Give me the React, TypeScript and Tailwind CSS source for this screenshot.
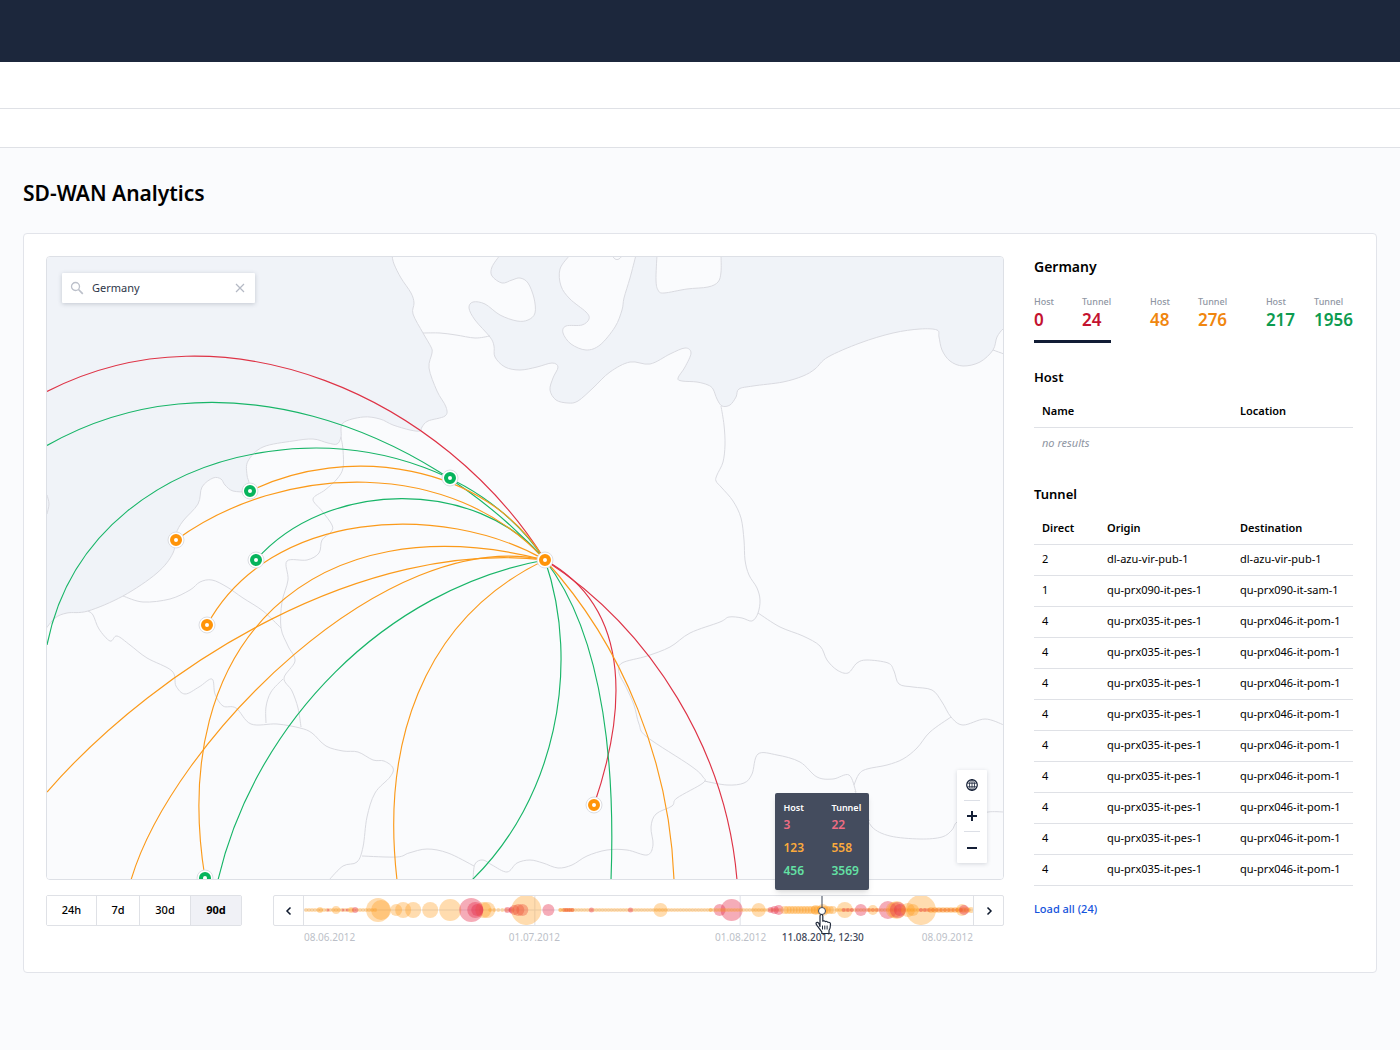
import { useState } from "react";
import type { ReactNode } from "react";

type Point = [number, number];

/* Smooth curve through the given points (Catmull-Rom converted to cubic Béziers). */
function curve(points: Point[], start = "M"): string {
  let d = `${start}${points[0][0]} ${points[0][1]}`;
  for (let i = 0; i < points.length - 1; i++) {
    const p0 = points[i - 1] ?? points[i];
    const p1 = points[i];
    const p2 = points[i + 1];
    const p3 = points[i + 2] ?? p2;
    const c1 = [p1[0] + (p2[0] - p0[0]) / 6, p1[1] + (p2[1] - p0[1]) / 6];
    const c2 = [p2[0] - (p3[0] - p1[0]) / 6, p2[1] - (p3[1] - p1[1]) / 6];
    d += `C${c1[0].toFixed(1)} ${c1[1].toFixed(1)} ${c2[0].toFixed(1)} ${c2[1].toFixed(1)} ${p2[0]} ${p2[1]}`;
  }
  return d;
}

/* One cubic Bézier from the first to the last point, fitted to the waypoints between them by least squares. */
function arc(points: Point[]): string {
  const n = points.length;
  const first = points[0];
  const last = points[n - 1];
  const t = [0];
  for (let i = 1; i < n; i++) {
    t.push(t[i - 1] + Math.hypot(points[i][0] - points[i - 1][0], points[i][1] - points[i - 1][1]));
  }
  const total = t[n - 1];
  for (let i = 0; i < n; i++) t[i] /= total;

  let c1: Point = first;
  let c2: Point = last;
  const at = (u: number): Point => {
    const v = 1 - u;
    return [0, 1].map(
      (k) => v * v * v * first[k] + 3 * v * v * u * c1[k] + 3 * v * u * u * c2[k] + u * u * u * last[k],
    ) as Point;
  };
  for (let pass = 0; pass < 30; pass++) {
    let aa = 0;
    let ab = 0;
    let bb = 0;
    const ra = [0, 0];
    const rb = [0, 0];
    for (let i = 1; i < n - 1; i++) {
      const u = t[i];
      const v = 1 - u;
      const a = 3 * v * v * u;
      const b = 3 * v * u * u;
      aa += a * a;
      ab += a * b;
      bb += b * b;
      for (const k of [0, 1]) {
        const rest = points[i][k] - v * v * v * first[k] - u * u * u * last[k];
        ra[k] += a * rest;
        rb[k] += b * rest;
      }
    }
    const det = aa * bb - ab * ab;
    c1 = [0, 1].map((k) => (bb * ra[k] - ab * rb[k]) / det) as Point;
    c2 = [0, 1].map((k) => (aa * rb[k] - ab * ra[k]) / det) as Point;
    for (let i = 1; i < n - 1; i++) {
      let best = t[i];
      let bestDistance = Infinity;
      for (let s = -20; s <= 20; s++) {
        const u = Math.min(0.999, Math.max(0.001, t[i] + s * 0.002));
        const [x, y] = at(u);
        const distance = Math.hypot(x - points[i][0], y - points[i][1]);
        if (distance < bestDistance) {
          bestDistance = distance;
          best = u;
        }
      }
      t[i] = best;
    }
  }
  return `M${first[0]} ${first[1]}C${c1[0].toFixed(1)} ${c1[1].toFixed(1)} ${c2[0].toFixed(1)} ${c2[1].toFixed(1)} ${last[0]} ${last[1]}`;
}

const NORTH_SEA_COAST: Point[] = [
  [392, 255], [394, 264], [401, 278], [411, 293], [414, 303], [413, 314], [423, 333], [431, 347], [432, 353], [429, 368], [437, 391],
  [446, 407], [445, 416], [428, 421], [422, 427], [420, 431], [410, 430], [393, 425], [380, 419], [363, 417], [343, 423], [341, 437],
  [337, 444], [328, 443], [313, 439], [293, 441], [263, 447], [248, 461], [247, 475], [249, 483], [247, 491], [233, 491],
  [225, 485], [221, 479], [213, 478], [202, 487], [198, 504], [183, 521], [176, 534], [173, 553], [157, 573],
  [123, 596], [88, 611], [67, 613], [55, 618], [45, 630],
];

const BALTIC_COAST: Point[] = [
  [1006, 329], [1003, 329], [997, 337], [993, 350], [980, 362], [963, 366], [950, 361], [942, 350], [939, 337], [937, 330], [920, 329],
  [893, 333], [860, 343], [828, 357], [815, 369], [803, 376], [783, 382], [753, 386], [739, 389], [736, 397], [730, 405],
  [722, 406], [717, 399], [713, 389], [708, 385], [697, 382], [682, 381], [678, 378], [685, 367], [691, 353], [685, 348],
  [670, 354], [650, 364], [630, 362], [610, 372], [593, 388], [578, 401], [568, 403], [556, 400], [550, 390], [553, 378],
  [558, 367], [552, 363], [537, 367], [520, 370], [505, 367], [495, 357], [494, 346], [490, 337], [475, 320], [469, 308],
  [473, 302], [485, 304], [500, 315], [517, 321], [528, 320], [535, 313], [534, 298], [528, 283], [520, 278], [512, 280],
  [502, 283], [492, 276], [492, 267], [500, 255],
];

const ZEALAND: Point[] = [
  [570, 255], [560, 269], [561, 286], [570, 299], [586, 312], [589, 319], [582, 325], [566, 326], [563, 333], [571, 344],
  [586, 350], [600, 345], [615, 327], [622, 310], [624, 298], [630, 278], [636, 255],
];

const SWEDEN: Point[] = [
  [657, 255], [656, 280], [658, 290], [664, 293], [687, 289], [708, 287], [718, 282], [721, 272], [721, 255],
];

const BORDERS: Point[][] = [
  [[423, 333], [440, 333], [456, 335], [475, 338], [490, 336]],
  [[47, 495], [49, 504], [47, 514]],
  [[612, 255], [615, 259], [619, 259], [623, 255]],
  [[993, 350], [1004, 354]],
  [[341, 437], [343, 450], [343, 468], [337, 479], [325, 490], [313, 499], [322, 511], [332, 525], [331, 532], [322, 540], [319, 553], [307, 560], [287, 561], [288, 580], [282, 602], [281, 628], [288, 646], [295, 661], [284, 678], [292, 691], [298, 708], [301, 727]],
  [[283, 679], [271, 692], [266, 707], [266, 723]],
  [[123, 596], [143, 602], [170, 599], [190, 590], [200, 582], [212, 580], [227, 587], [243, 598], [263, 611], [281, 628]],
  [[88, 611], [93, 615], [99, 629], [110, 641], [117, 636], [130, 645], [147, 658], [172, 671], [176, 686], [185, 694], [199, 687], [212, 679], [215, 694], [223, 706], [236, 708], [251, 724], [277, 724], [300, 728], [312, 733], [326, 746], [343, 751], [358, 752], [373, 760], [384, 761], [393, 768], [390, 777], [375, 793], [367, 817], [363, 847], [357, 862], [343, 866], [329, 880]],
  [[362, 856], [397, 857], [409, 853], [427, 849], [448, 853], [474, 866]],
  [[473, 880], [475, 864], [483, 860], [492, 865], [507, 872], [517, 863], [530, 860], [543, 863], [558, 868], [572, 865], [587, 856], [607, 850], [627, 850], [647, 855], [653, 845], [651, 827], [656, 814], [672, 806], [677, 798], [703, 783], [703, 777], [691, 766], [647, 737], [639, 724], [634, 705], [626, 687], [619, 673], [622, 663], [647, 656], [670, 647], [690, 633], [720, 622], [729, 617], [742, 618], [752, 621], [758, 613], [760, 600], [757, 588], [749, 575], [745, 560], [744, 540], [741, 518], [733, 501], [722, 488], [716, 481], [717, 475], [723, 462], [725, 445], [724, 425], [721, 406]],
  [[758, 613], [780, 627], [803, 636], [820, 646], [827, 660], [837, 670], [848, 673], [857, 663], [867, 660], [888, 663], [894, 671], [899, 684], [913, 687], [932, 690], [942, 702], [951, 717], [963, 725], [985, 719], [1004, 725]],
  [[951, 717], [930, 732], [917, 748], [903, 759], [887, 765], [867, 769], [859, 774], [854, 785]],
  [[704, 781], [727, 785], [744, 783], [752, 774], [758, 754], [777, 755], [800, 762], [817, 777], [833, 779], [849, 775], [856, 792]],
  [[855, 791], [864, 810], [872, 827], [890, 836], [920, 839], [942, 837], [952, 830], [957, 822], [972, 817], [988, 812], [1004, 812]],
  [[864, 824], [870, 820]],
];

const RED = "#de3346";
const GREEN = "#18b568";
const ORANGE = "#fb9a1a";

const TUNNELS: { color: string; points: Point[] }[] = [
  { color: RED, points: [[47, 391.5], [100, 370.5], [150, 359.7], [202, 356], [250, 359.8], [333, 384], [400, 417], [434, 440], [475, 475], [507, 509], [545, 560]] },
  { color: RED, points: [[545, 560], [577, 585], [597, 610], [610, 640], [616, 690], [608, 755], [594, 805]] },
  { color: RED, points: [[545, 560], [580, 585], [620, 623], [650, 658], [690, 720], [712, 769], [730, 833], [737, 880]] },
  { color: GREEN, points: [[47, 445.5], [100, 422], [155, 407.5], [217, 402.7], [280, 407.5], [342, 424.5], [380, 440.5], [410, 455], [440, 473], [470, 493], [510, 525], [545, 560]] },
  { color: GREEN, points: [[47, 645], [67, 595], [91, 553], [140, 500], [177, 477], [213, 462], [263, 452], [310, 450], [350, 452], [397, 460.7], [440, 474.3], [470, 487.5], [503, 509], [527, 532], [545, 560]] },
  { color: GREEN, points: [[256, 560], [290, 531.7], [317, 515.7], [350, 504], [397, 498.7], [430, 501], [470, 511], [507, 526], [527, 539], [545, 560]] },
  { color: GREEN, points: [[218, 880], [230, 840], [248, 797], [270, 753], [297, 715], [330, 677], [360, 650], [410, 613], [460, 586.5], [503, 569], [545, 560]] },
  { color: GREEN, points: [[545, 560], [557, 600], [561, 640], [560, 680], [553, 723], [540, 777], [520, 817], [500, 850], [472, 880]] },
  { color: GREEN, points: [[545, 560], [573, 603], [590, 653], [599, 700], [608, 757], [612, 807], [613, 840], [611, 880]] },
  { color: ORANGE, points: [[250, 491], [270, 483], [297, 474], [330, 467.7], [368, 466], [400, 469.5], [440, 479], [487, 502], [510, 518], [545, 560]] },
  { color: ORANGE, points: [[176, 540], [210, 520], [243, 504], [283, 490], [320, 484], [355, 482.5], [403, 486], [447, 496.5], [487, 514.5], [517, 533], [545, 560]] },
  { color: ORANGE, points: [[207, 625], [227, 595], [257, 568], [283, 551], [317, 537], [355, 528.5], [402, 524.7], [440, 526.7], [480, 533.5], [513, 543.5], [545, 560]] },
  { color: ORANGE, points: [[205, 878], [200, 813], [204, 748], [215, 703], [227, 673], [252, 631], [283, 598], [317, 576], [350, 562], [380, 554], [440, 547], [495, 550.5], [545, 560]] },
  { color: ORANGE, points: [[47, 792], [80, 757], [120, 720], [173, 677], [233, 640], [313, 602], [360, 584], [403, 571], [447, 560], [487, 554.5], [545, 560]] },
  { color: ORANGE, points: [[131, 880], [145, 843], [173, 792], [203, 749], [237, 710], [287, 661], [330, 627], [380, 596], [403, 583], [443, 566], [480, 556], [545, 560]] },
  { color: ORANGE, points: [[545, 560], [493, 593], [460, 625], [437, 656], [415, 699], [405, 730], [397, 777], [395, 830], [397, 880]] },
  { color: ORANGE, points: [[545, 560], [580, 600], [610, 652], [633, 700], [647, 735], [660, 777], [670, 827], [674, 880]] },
];

const TUNNEL_PATHS = TUNNELS.map((t) => ({ color: t.color, d: arc(t.points) }));

const SITES: { name: string; at: Point; color: string }[] = [
  { name: "hub", at: [545, 560], color: "#ff9408" },
  { name: "north", at: [450, 478], color: "#06b45c" },
  { name: "coast", at: [250, 491], color: "#06b45c" },
  { name: "west", at: [176, 540], color: "#ff9408" },
  { name: "east", at: [256, 560], color: "#06b45c" },
  { name: "inland", at: [207, 625], color: "#ff9408" },
  { name: "alps", at: [594, 805], color: "#ff9408" },
  { name: "south", at: [205, 878], color: "#06b45c" },
];

function NetworkMap() {
  const west = curve(NORTH_SEA_COAST);
  const east = curve(BALTIC_COAST);
  return (
    <svg
      role="img"
      aria-label="Map of tunnels between hosts"
      viewBox="47 257 956 622"
      preserveAspectRatio="xMidYMid slice"
      className="block h-[622px] w-full bg-[#f0f3f8]"
    >
      <path fill="#fafbfd" d={`${west}V890H1010V329${curve(BALTIC_COAST, "L")}Z`} />
      <g fill="none" stroke="#d9dae0" strokeWidth="1">
        <path d={west} />
        <path d={east} />
        <path d={curve(ZEALAND)} fill="#fafbfd" />
        <path d={curve(SWEDEN)} fill="#fafbfd" />
        {BORDERS.map((b, i) => (
          <path key={i} d={curve(b)} />
        ))}
      </g>
      <g fill="none" strokeWidth="1.15">
        {TUNNEL_PATHS.map((t, i) => (
          <path key={i} d={t.d} stroke={t.color} />
        ))}
      </g>
      {SITES.map((s) => (
        <g key={s.name}>
          <circle cx={s.at[0]} cy={s.at[1]} r="8" fill="#fff" stroke="#dcdee3" />
          <circle cx={s.at[0]} cy={s.at[1]} r="4" fill="none" stroke={s.color} strokeWidth="4" />
        </g>
      ))}
    </svg>
  );
}

type Bubble = { x: number; r: number; tone: "o" | "r" };

const run = (from: number, to: number, step: number, r: number, tone: "o" | "r"): Bubble[] =>
  Array.from({ length: Math.floor((to - from) / step) + 1 }, (_, i) => ({ x: from + i * step, r, tone }));

const BUBBLES: Bubble[] = [
  ...run(306, 376, 3, 2, "o"),
  { x: 320, r: 3, tone: "o" }, { x: 328, r: 1.5, tone: "r" }, { x: 336, r: 4, tone: "o" },
  { x: 343, r: 1.5, tone: "r" }, { x: 347, r: 1.5, tone: "r" }, { x: 351, r: 3, tone: "o" }, { x: 355, r: 3, tone: "r" },
  { x: 378, r: 12, tone: "o" }, { x: 381, r: 10, tone: "o" }, { x: 396, r: 6, tone: "o" }, { x: 403, r: 8, tone: "o" },
  { x: 413, r: 8, tone: "o" }, { x: 430, r: 8, tone: "o" }, { x: 450, r: 11, tone: "o" },
  { x: 483, r: 8, tone: "o" }, { x: 487, r: 8, tone: "o" }, { x: 471, r: 12, tone: "r" }, { x: 475, r: 8, tone: "r" }, { x: 477, r: 6, tone: "r" },
  ...run(490, 512, 4, 2, "o"),
  { x: 507, r: 3, tone: "r" }, { x: 514, r: 5, tone: "r" }, { x: 518, r: 6, tone: "r" }, { x: 522, r: 6, tone: "r" }, { x: 511, r: 3, tone: "r" },
  { x: 526, r: 15, tone: "o" }, { x: 548, r: 6, tone: "r" },
  ...run(560, 712, 3, 2, "o"), ...run(564, 573, 2, 2, "r"), ...run(560, 574, 3, 2, "o"),
  { x: 591, r: 2.5, tone: "r" }, { x: 630, r: 2.5, tone: "r" }, { x: 660, r: 7, tone: "o" },
  { x: 719, r: 6, tone: "r" }, { x: 731, r: 11, tone: "r" },
  ...run(710, 780, 3, 2, "o"), { x: 758, r: 7, tone: "o" },
  { x: 770, r: 3, tone: "r" }, { x: 774, r: 4, tone: "r" }, { x: 778, r: 5, tone: "r" },
  ...run(784, 833, 3, 4, "o"), { x: 822, r: 6, tone: "o" }, { x: 815, r: 5, tone: "o" },
  ...run(836, 970, 3, 2, "o"), { x: 844, r: 8, tone: "o" }, ...run(843, 853, 4, 2, "r"),
  { x: 860, r: 6, tone: "r" }, ...run(868, 879, 4, 2, "r"), { x: 872, r: 5, tone: "o" },
  { x: 887, r: 9, tone: "r" }, { x: 893, r: 8, tone: "o" }, { x: 896, r: 9, tone: "o" }, { x: 897, r: 8, tone: "r" }, { x: 899, r: 6, tone: "r" },
  { x: 907, r: 7, tone: "o" }, { x: 912, r: 6, tone: "o" }, { x: 920, r: 15, tone: "o" }, ...run(920, 962, 4, 2, "r"),
  ...run(930, 970, 4, 3, "o"), { x: 961, r: 6, tone: "o" }, { x: 963, r: 5, tone: "r" },
];

function Timeline() {
  return (
    <svg viewBox="304 896 668 29" preserveAspectRatio="xMidYMid slice" aria-hidden="true" className="block h-[29px] w-full">
      <path d="M304 910H972M534.5 896V925M739.5 896V925" stroke="#dfe1e8" />
      {BUBBLES.map((b, i) => (
        <circle key={i} cx={b.x} cy="910" r={b.r} fill={b.tone === "o" ? "#ff9c1a" : "#e5304e"} fillOpacity={b.tone === "o" ? 0.35 : 0.4} />
      ))}
    </svg>
  );
}

function HandCursor() {
  return (
    <svg viewBox="0 0 18 22" aria-hidden="true" className="h-[22px] w-[18px]">
      <path
        d="M5 13.5V3.2c0-1 .6-1.7 1.4-1.7s1.4.7 1.4 1.7v5c.3-.5 2.3-.5 2.6.5.5-.4 2.2-.3 2.5.7.7-.4 2.6 0 2.6 1.5 0 3.6-.3 4.6-1.500 6.600V20.500H6.800V18.800C5.200 17 4 15.200 2.300 12.800c-.8-1.200-1.700-2-1.100-2.900.7-1 2-.4 2.700.5z"
        fill="#fff"
        stroke="#222b3c"
        strokeWidth="1.2"
        strokeLinejoin="round"
      />
      <path d="M7.5 12.5v4M9.8 12.5v4M12.1 12.5v4" stroke="#222b3c" strokeWidth="1" />
    </svg>
  );
}

const TOOLTIP_ROWS = [
  { host: "3", tunnel: "22", tone: "text-[#ef6c83]" },
  { host: "123", tunnel: "558", tone: "text-[#fbaa3c]" },
  { host: "456", tunnel: "3569", tone: "text-[#63e0a4]" },
];

function TimelineTooltip() {
  return (
    <div role="tooltip" className="absolute bottom-full left-1/2 mb-1.5 w-[94px] -translate-x-1/2 rounded-[2px] bg-[#444c5e] px-2 pt-2 pb-2 shadow-md">
      <table className="w-full text-left leading-none">
        <thead>
          <tr className="text-[9px] text-white">
            <th className="h-3 w-12 font-semibold">Host</th>
            <th className="h-3 font-semibold">Tunnel</th>
          </tr>
        </thead>
        <tbody>
          {TOOLTIP_ROWS.map((r) => (
            <tr key={r.host} className={r.tone}>
              <td className="h-[23px] text-[12px] font-semibold">{r.host}</td>
              <td className="h-[23px] text-[12px] font-semibold">{r.tunnel}</td>
            </tr>
          ))}
        </tbody>
      </table>
    </div>
  );
}

const RANGES = ["24h", "7d", "30d", "90d"];
const RANGE_WIDTHS: Record<string, string> = { "24h": "w-[50px]", "7d": "w-[43px]", "30d": "w-[51px]", "90d": "w-[50px]" };

function TimelineBar() {
  const [range, setRange] = useState("90d");
  return (
    <div className="mt-[15px] flex items-start gap-[31px]">
      <div className="flex h-[31px] shrink-0 divide-x divide-[#dfe1e6] rounded-[2px] border border-[#dfe1e6] text-[11px] text-black">
        {RANGES.map((r) => (
          <button
            key={r}
            type="button"
            aria-pressed={range === r}
            onClick={() => setRange(r)}
            className={`${RANGE_WIDTHS[r]} ${range === r ? "bg-[#f0f1f6] font-bold" : "bg-white font-medium"}`}
          >
            {r}
          </button>
        ))}
      </div>
      <div className="min-w-0 flex-1">
        <div className="flex h-[31px] rounded-[2px] border border-[#dfe1e6]">
          <button type="button" aria-label="Earlier" className="flex w-[30px] shrink-0 items-center justify-center border-r border-[#dfe1e6]">
            <Chevron d="M6.5 1.5 3 5l3.5 3.5" />
          </button>
          <div className="relative min-w-0 flex-1">
            <Timeline />
            <div className="absolute inset-y-0 left-[77.5%] w-0">
              <span className="absolute top-0 left-0 h-[15px] w-px -translate-x-1/2 bg-[#3f485a]" />
              <TimelineTooltip />
              <span className="absolute top-[11px] left-0 size-2 -translate-x-1/2 rounded-full border border-[#3f485a] bg-white" />
              <span className="absolute top-[17px] left-0.5 -translate-x-1/2">
                <HandCursor />
              </span>
            </div>
          </div>
          <button type="button" aria-label="Later" className="flex w-[30px] shrink-0 items-center justify-center border-l border-[#dfe1e6]">
            <Chevron d="M3.5 1.5 7 5 3.5 8.5" />
          </button>
        </div>
        <div className="mx-[31px] mt-[3px] grid grid-cols-[62fr_336fr_76fr_88fr_106fr] text-[10px] leading-4 whitespace-nowrap text-[#bcbfc8]">
          <span>08.06.2012</span>
          <span className="text-center">01.07.2012</span>
          <span className="text-center">01.08.2012</span>
          <span className="text-center font-medium text-[#3f485a]">11.08.2012, 12:30</span>
          <span className="text-right">08.09.2012</span>
        </div>
      </div>
    </div>
  );
}

function Chevron({ d }: { d: string }) {
  return (
    <svg viewBox="0 0 10 10" aria-hidden="true" className="size-[10px]">
      <path d={d} fill="none" stroke="#0f1a2e" strokeWidth="1.5" />
    </svg>
  );
}

function MapSearch() {
  const [query, setQuery] = useState("Germany");
  return (
    <div className="absolute top-4 left-[15px] flex h-[30px] w-[193px] items-center rounded-[1px] bg-white pr-2.5 pl-2 shadow-[0_1px_4px_rgba(60,70,90,0.25)]">
      <svg viewBox="0 0 14 14" aria-hidden="true" className="size-[14px] shrink-0">
        <circle cx="5.5" cy="5.5" r="4" fill="none" stroke="#bcc0ca" strokeWidth="1.3" />
        <path d="m8.5 8.5 4.3 4.3" stroke="#bcc0ca" strokeWidth="1.7" />
      </svg>
      <input
        aria-label="Search location"
        value={query}
        onChange={(e) => setQuery(e.target.value)}
        className="ml-2 min-w-0 flex-1 bg-transparent text-[11px] text-[#2c3548] outline-none"
      />
      <button type="button" aria-label="Clear" onClick={() => setQuery("")}>
        <svg viewBox="0 0 10 10" aria-hidden="true" className="size-[10px]">
          <path d="m1 1 8 8M9 1 1 9" stroke="#b4b9c4" strokeWidth="1.2" />
        </svg>
      </button>
    </div>
  );
}

function MapControl({ label, children }: { label: string; children: ReactNode }) {
  return (
    <button type="button" aria-label={label} className="flex h-[31px] w-4 items-center justify-center">
      <svg viewBox="0 0 12 12" aria-hidden="true" className="size-3 shrink-0" fill="none" stroke="#141f36">
        {children}
      </svg>
    </button>
  );
}

function MapControls() {
  return (
    <div className="absolute right-4 bottom-4 flex w-[30px] flex-col items-center divide-y divide-[#dcdfe6] rounded-[1px] bg-white shadow-[0_1px_4px_rgba(60,70,90,0.2)]">
      <MapControl label="Whole world">
        <circle cx="6" cy="6" r="5.3" strokeWidth="1.2" />
        <g strokeWidth="0.8">
          <ellipse cx="6" cy="6" rx="2.5" ry="5.3" />
          <path d="M6 .7v10.600M1.300 4.200h9.400M1.300 7.800h9.400" />
        </g>
      </MapControl>
      <MapControl label="Zoom in">
        <path d="M6 1v10M1 6h10" strokeWidth="2" />
      </MapControl>
      <MapControl label="Zoom out">
        <path d="M1 6h10" strokeWidth="2" />
      </MapControl>
    </div>
  );
}

const STATS = [
  { host: "0", tunnel: "24", tone: "text-[#c4122f]" },
  { host: "48", tunnel: "276", tone: "text-[#f0860f]" },
  { host: "217", tunnel: "1956", tone: "text-[#0d9b50]" },
];

function StatTabs() {
  const [active, setActive] = useState(0);
  return (
    <div className="mt-[17px] flex justify-between">
      {STATS.map((s, i) => (
        <button
          key={s.tunnel}
          type="button"
          aria-pressed={active === i}
          onClick={() => setActive(i)}
          className={`flex gap-[19px] border-b-[3px] pb-2 text-left ${active === i ? "border-[#121d35]" : "border-transparent"}`}
        >
          <Stat label="Host" value={s.host} tone={s.tone} />
          <Stat label="Tunnel" value={s.tunnel} tone={s.tone} />
        </button>
      ))}
    </div>
  );
}

function Stat({ label, value, tone }: { label: string; value: string; tone: string }) {
  return (
    <span className="flex min-w-[29px] flex-col">
      <span className="text-[9px] leading-[13px] font-medium text-[#8f96a3]">{label}</span>
      <span className={`text-[17px] leading-6 font-semibold ${tone}`}>{value}</span>
    </span>
  );
}

const TUNNEL_ROWS: [string, string, string][] = [
  ["2", "dl-azu-vir-pub-1", "dl-azu-vir-pub-1"],
  ["1", "qu-prx090-it-pes-1", "qu-prx090-it-sam-1"],
  ...Array.from({ length: 9 }, (): [string, string, string] => ["4", "qu-prx035-it-pes-1", "qu-prx046-it-pom-1"]),
];

function Details() {
  return (
    <aside className="w-[319px] shrink-0 text-black">
      <h2 className="text-[14px] leading-[22px] font-semibold">Germany</h2>
      <StatTabs />

      <h3 id="host-title" className="mt-6 text-[13px] leading-5 font-semibold">Host</h3>
      <table aria-labelledby="host-title" className="mt-[9px] w-full table-fixed text-left text-[11px]">
        <thead>
          <tr className="h-[31px] border-b border-[#dfe1e6]">
            <th className="w-[198px] pl-2 font-semibold">Name</th>
            <th className="pl-2 font-semibold">Location</th>
          </tr>
        </thead>
        <tbody>
          <tr className="h-[31px]">
            <td colSpan={2} className="pl-2 text-[#8f96a3] italic">no results</td>
          </tr>
        </tbody>
      </table>

      <h3 id="tunnel-title" className="mt-[26px] text-[13px] leading-5 font-semibold">Tunnel</h3>
      <table aria-labelledby="tunnel-title" className="mt-[9px] w-full table-fixed text-left text-[11px]">
        <thead>
          <tr className="h-[31px] border-b border-[#dfe1e6]">
            <th className="w-[65px] pl-2 font-semibold">Direct</th>
            <th className="w-[133px] pl-2 font-semibold">Origin</th>
            <th className="pl-2 font-semibold">Destination</th>
          </tr>
        </thead>
        <tbody>
          {TUNNEL_ROWS.map(([direct, origin, destination], i) => (
            <tr key={i} className="h-[31px] border-b border-[#dfe1e6]">
              <td className="pl-2">{direct}</td>
              <td className="pl-2">{origin}</td>
              <td className="pl-2">{destination}</td>
            </tr>
          ))}
        </tbody>
      </table>
      <a href="#all" className="mt-[15px] inline-block text-[11px] leading-4 font-medium text-[#1554dc]">Load all (24)</a>
    </aside>
  );
}

export default function App() {
  return (
    <div className="min-h-screen bg-[#fafbfd] font-['Noto_Sans',sans-serif]">
      <header>
        <div className="h-[62px] bg-[#1c273c]" />
        <div className="h-[47px] border-b border-[#dfe1e6] bg-white" />
        <div className="h-[39px] border-b border-[#dfe1e6] bg-white" />
      </header>
      <main className="px-[23px] pt-[29px] pb-10">
        <h1 className="text-[21px] leading-8 font-semibold text-black">SD-WAN Analytics</h1>
        <section className="mt-6 flex gap-[30px] rounded border border-[#e2e4ea] bg-white pt-[22px] pr-[23px] pb-[27px] pl-[22px]">
          <div className="min-w-0 flex-1">
            <div className="relative overflow-hidden rounded border border-[#dde0e6]">
              <NetworkMap />
              <MapSearch />
              <MapControls />
            </div>
            <TimelineBar />
          </div>
          <Details />
        </section>
      </main>
    </div>
  );
}
